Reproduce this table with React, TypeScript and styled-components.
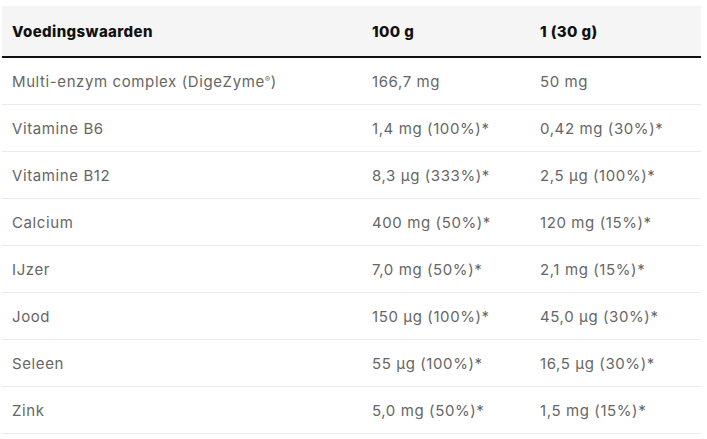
import React from "react";
import styled, { createGlobalStyle } from "styled-components";

const GlobalStyle = createGlobalStyle`
  body {
    margin: 0;
    background: #ffffff;
    font-family: "Inter", "Liberation Sans", sans-serif;
  }
`;

const Wrapper = styled.div`
  padding: 6px 0 0 2px;
`;

const Table = styled.table`
  width: 699px;
  border-collapse: collapse;
  table-layout: fixed;
`;

const HeadRow = styled.tr`
  background-color: #f5f5f5;
  border-bottom: 2px solid #111111;
`;

const Th = styled.th<{ $width: number }>`
  width: ${(p) => p.$width}px;
  height: 50px;
  padding: 0 10px;
  text-align: left;
  font-size: 15px;
  font-weight: 800;
  color: #111111;
  letter-spacing: 0.4px;
`;

const Row = styled.tr`
  border-bottom: 1px solid #ebebeb;
`;

const Td = styled.td`
  height: 46px;
  padding: 0 10px;
  font-size: 15px;
  font-weight: 400;
  color: #666666;
  letter-spacing: 0.6px;
  white-space: nowrap;
`;

const Reg = styled.sup`
  font-size: 8px;
  vertical-align: 5px;
`;

const rows: [React.ReactNode, string, string][] = [
  [
    <>
      Multi-enzym complex (DigeZyme<Reg>®</Reg>)
    </>,
    "166,7 mg",
    "50 mg",
  ],
  ["Vitamine B6", "1,4 mg (100%)*", "0,42 mg (30%)*"],
  ["Vitamine B12", "8,3 µg (333%)*", "2,5 µg (100%)*"],
  ["Calcium", "400 mg (50%)*", "120 mg (15%)*"],
  ["IJzer", "7,0 mg (50%)*", "2,1 mg (15%)*"],
  ["Jood", "150 µg (100%)*", "45,0 µg (30%)*"],
  ["Seleen", "55 µg (100%)*", "16,5 µg (30%)*"],
  ["Zink", "5,0 mg (50%)*", "1,5 mg (15%)*"],
];

const App = () => {
  return (
    <>
      <GlobalStyle />
      <Wrapper>
        <Table>
          <thead>
            <HeadRow>
              <Th $width={340}>Voedingswaarden</Th>
              <Th $width={148}>100 g</Th>
              <Th $width={151}>1 (30 g)</Th>
            </HeadRow>
          </thead>
          <tbody>
            {rows.map((r, k) => (
              <Row key={k}>
                <Td>{r[0]}</Td>
                <Td>{r[1]}</Td>
                <Td>{r[2]}</Td>
              </Row>
            ))}
          </tbody>
        </Table>
      </Wrapper>
    </>
  );
};

export default App;
